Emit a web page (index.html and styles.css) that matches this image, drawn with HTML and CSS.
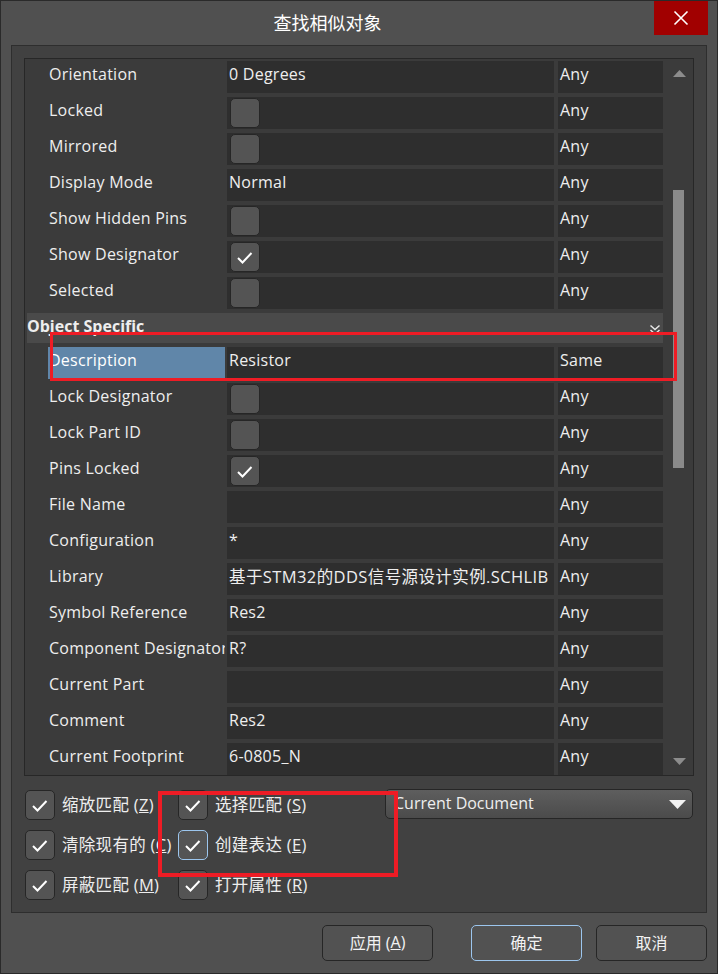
FILE: index.html
```html
<!DOCTYPE html>
<html>
<head>
<meta charset="utf-8">
<link rel="stylesheet" href="styles.css">
</head>
<body>
<div class="dialog">
  <div class="titlebar">
    <div class="title">查找相似对象</div>
    <div class="close"><svg width="16" height="16" viewBox="0 0 16 16"><path d="M1.5 1.5 L14.5 14.5 M14.5 1.5 L1.5 14.5" stroke="#fff" stroke-width="1.6" fill="none"/></svg></div>
  </div>
  <div class="panel">
    <div class="grid">
      <div class="rows">
        <div class="row"><div class="name">Orientation</div><div class="val">0 Degrees</div><div class="match">Any</div></div>
        <div class="row"><div class="name">Locked</div><div class="val"><span class="cb"></span></div><div class="match">Any</div></div>
        <div class="row"><div class="name">Mirrored</div><div class="val"><span class="cb"></span></div><div class="match">Any</div></div>
        <div class="row"><div class="name">Display Mode</div><div class="val">Normal</div><div class="match">Any</div></div>
        <div class="row"><div class="name">Show Hidden Pins</div><div class="val"><span class="cb"></span></div><div class="match">Any</div></div>
        <div class="row"><div class="name">Show Designator</div><div class="val"><span class="cb"><svg width="30" height="30" viewBox="0 0 30 30"><polyline points="8,16 12.5,20.5 21.5,11" stroke="#fff" stroke-width="2" fill="none"/></svg></span></div><div class="match">Any</div></div>
        <div class="row"><div class="name">Selected</div><div class="val"><span class="cb"></span></div><div class="match">Any</div></div>
        <div class="section"><span class="section-label">Object Specific</span><svg class="chev" width="12" height="12" viewBox="0 0 12 12"><polyline points="1.5,1.5 6,5.5 10.5,1.5" stroke="#e8e8e8" stroke-width="1.5" fill="none"/><polyline points="1.5,6 6,10 10.5,6" stroke="#e8e8e8" stroke-width="1.5" fill="none"/></svg></div>
        <div class="row"><div class="name sel">Description</div><div class="val">Resistor</div><div class="match">Same</div></div>
        <div class="row"><div class="name">Lock Designator</div><div class="val"><span class="cb"></span></div><div class="match">Any</div></div>
        <div class="row"><div class="name">Lock Part ID</div><div class="val"><span class="cb"></span></div><div class="match">Any</div></div>
        <div class="row"><div class="name">Pins Locked</div><div class="val"><span class="cb"><svg width="30" height="30" viewBox="0 0 30 30"><polyline points="8,16 12.5,20.5 21.5,11" stroke="#fff" stroke-width="2" fill="none"/></svg></span></div><div class="match">Any</div></div>
        <div class="row"><div class="name">File Name</div><div class="val"></div><div class="match">Any</div></div>
        <div class="row"><div class="name">Configuration</div><div class="val">*</div><div class="match">Any</div></div>
        <div class="row"><div class="name">Library</div><div class="val"><span class="lib">基于STM32的DDS信号源设计实例.SCHLIB</span></div><div class="match">Any</div></div>
        <div class="row"><div class="name">Symbol Reference</div><div class="val">Res2</div><div class="match">Any</div></div>
        <div class="row"><div class="name">Component Designator</div><div class="val">R?</div><div class="match">Any</div></div>
        <div class="row"><div class="name">Current Part</div><div class="val"></div><div class="match">Any</div></div>
        <div class="row"><div class="name">Comment</div><div class="val">Res2</div><div class="match">Any</div></div>
        <div class="row"><div class="name">Current Footprint</div><div class="val">6-0805_N</div><div class="match">Any</div></div>
      </div>
      <div class="scroll">
        <svg class="arrow-up" width="13" height="7" viewBox="0 0 13 7"><polygon points="0,7 6.5,0 13,7" fill="#8c8c8c"/></svg>
        <div class="thumb"></div>
        <svg class="arrow-down" width="13" height="7" viewBox="0 0 13 7"><polygon points="0,0 13,0 6.5,7" fill="#8c8c8c"/></svg>
      </div>
    </div>
    <div class="opts">
      <div class="col col1">
        <div class="opt"><span class="cb"><svg width="30" height="30" viewBox="0 0 30 30"><polyline points="8,16 12.5,20.5 21.5,11" stroke="#fff" stroke-width="2" fill="none"/></svg></span><span class="lbl">缩放匹配 (<u>Z</u>)</span></div>
        <div class="opt"><span class="cb"><svg width="30" height="30" viewBox="0 0 30 30"><polyline points="8,16 12.5,20.5 21.5,11" stroke="#fff" stroke-width="2" fill="none"/></svg></span><span class="lbl">清除现有的 (<u>C</u>)</span></div>
        <div class="opt"><span class="cb"><svg width="30" height="30" viewBox="0 0 30 30"><polyline points="8,16 12.5,20.5 21.5,11" stroke="#fff" stroke-width="2" fill="none"/></svg></span><span class="lbl">屏蔽匹配 (<u>M</u>)</span></div>
      </div>
      <div class="col col2">
        <div class="opt"><span class="cb"><svg width="30" height="30" viewBox="0 0 30 30"><polyline points="8,16 12.5,20.5 21.5,11" stroke="#fff" stroke-width="2" fill="none"/></svg></span><span class="lbl">选择匹配 (<u>S</u>)</span></div>
        <div class="opt"><span class="cb focus"><svg width="30" height="30" viewBox="0 0 30 30"><polyline points="8,16 12.5,20.5 21.5,11" stroke="#fff" stroke-width="2" fill="none"/></svg></span><span class="lbl">创建表达 (<u>E</u>)</span></div>
        <div class="opt"><span class="cb"><svg width="30" height="30" viewBox="0 0 30 30"><polyline points="8,16 12.5,20.5 21.5,11" stroke="#fff" stroke-width="2" fill="none"/></svg></span><span class="lbl">打开属性 (<u>R</u>)</span></div>
      </div>
      <div class="dropdown"><span>Current Document</span><svg width="17" height="9" viewBox="0 0 17 9"><polygon points="0,0 17,0 8.5,9" fill="#f2f2f2"/></svg></div>
    </div>
  </div>
  <div class="buttons">
    <div class="btn btn-apply">应用 (<u>A</u>)</div>
    <div class="btn btn-ok">确定</div>
    <div class="btn btn-cancel">取消</div>
  </div>
  <div class="mark mark1"></div>
  <div class="mark mark2"></div>
</div>
</body>
</html>
```

FILE: styles.css
```css
* { box-sizing: border-box; }
html, body { margin: 0; padding: 0; }
body {
  background: #2a2a2a;
  font-family: "Open Sans", "Noto Sans CJK SC", sans-serif;
  color: #eeeeee;
}
.dialog {
  position: relative;
  width: 718px;
  height: 974px;
  background: #505050;
  border: 1px solid #2a2a2a;
  display: flex;
  flex-direction: column;
}
.titlebar {
  height: 44px;
  display: flex;
  align-items: flex-start;
  flex-shrink: 0;
}
.title {
  flex: 1;
  height: 44px;
  line-height: 42px;
  text-align: center;
  font-size: 18px;
  font-family: "Noto Sans CJK SC", sans-serif;
  color: #ffffff;
}
.close {
  width: 54px;
  height: 34px;
  margin-right: 9px;
  background: #a10000;
  display: flex;
  align-items: center;
  justify-content: center;
}
.panel {
  margin: 0 10px;
  border: 1px solid #2e2e2e;
  background: #414141;
  padding: 12px;
  flex-shrink: 0;
}
.grid {
  height: 718px;
  border: 1px solid #272727;
  background: #3b3b3b;
  display: flex;
}
.rows {
  width: 638px;
  padding-top: 2px;
  display: flex;
  flex-direction: column;
  gap: 4px;
  overflow: hidden;
}
.row {
  height: 32px;
  display: flex;
  flex-shrink: 0;
  font-size: 16px;
  letter-spacing: 0.25px;
}
.name, .val, .match {
  display: flex;
  align-items: center;
  white-space: nowrap;
  overflow: hidden;
  padding-bottom: 6px;
}
.name {
  width: 177px;
  margin-left: 23px;
  padding-left: 1px;
}
.name.sel {
  background: #6086a9;
  color: #ffffff;
}
.val {
  width: 327px;
  margin-left: 2px;
  padding-left: 2px;
  background: #2e2e2e;
}
.lib {
  font-size: 16.5px;
  letter-spacing: 0.4px;
}
.match {
  width: 105px;
  margin-left: 4px;
  padding-left: 2px;
  background: #2e2e2e;
}
.val .cb {
  margin-left: 1px;
  margin-top: 6px;
}
.section {
  height: 30px;
  flex-shrink: 0;
  margin-left: 2px;
  background: #4a4a4a;
  font-weight: bold;
  font-size: 16px;
  display: flex;
  align-items: center;
  justify-content: space-between;
  padding-left: 0;
  padding-right: 2px;
  padding-bottom: 5px;
}
.chev { margin-top: 8px; }
.cb {
  width: 30px;
  height: 30px;
  flex-shrink: 0;
  border: 1px solid #262626;
  border-radius: 5px;
  background: #545454;
  display: block;
  position: relative;
}
.cb svg {
  position: absolute;
  left: -1px;
  top: -1px;
}
.cb.focus {
  border: 1.5px solid #9cc6ee;
}
.scroll {
  width: 30px;
  display: flex;
  flex-direction: column;
  align-items: flex-start;
  padding-left: 10px;
}
.arrow-up { margin-top: 11px; display: block; }
.thumb {
  width: 11px;
  height: 278px;
  margin-top: 113px;
  background: #8a8a8a;
}
.arrow-down { margin-top: auto; margin-bottom: 10px; display: block; }
.opts {
  display: flex;
  margin-top: 14px;
  padding-left: 1px;
}
.col {
  display: flex;
  flex-direction: column;
  gap: 10px;
}
.col1 { width: 153px; }
.col2 { width: 207px; }
.opt {
  display: flex;
  align-items: center;
  gap: 7px;
  height: 30px;
  font-size: 16.5px;
  white-space: nowrap;
}
.lbl { padding-bottom: 2px; letter-spacing: 0.3px; }
.dropdown {
  width: 308px;
  height: 30px;
  margin-top: -1px;
  border: 1px solid #262626;
  border-radius: 5px;
  background: linear-gradient(#5e5e5e, #4b4b4b);
  display: flex;
  align-items: center;
  justify-content: space-between;
  padding: 0 6px 3px 8px;
  font-size: 16px;
}
.dropdown svg { margin-top: 3px; }
.buttons {
  display: flex;
  justify-content: flex-end;
  margin-top: 12px;
  padding-right: 10px;
}
.btn {
  height: 36px;
  border: 1px solid #262626;
  border-radius: 5px;
  background: #525252;
  display: flex;
  align-items: center;
  justify-content: center;
  font-size: 16px;
  padding-bottom: 2px;
  color: #f2f2f2;
}
.btn-apply { width: 111px; }
.btn-ok { width: 111px; margin-left: 38px; border: 1.5px solid #9cc6ee; }
.btn-cancel { width: 111px; margin-left: 14px; }
.mark {
  position: absolute;
  border: 3px solid #ee1c25;
  pointer-events: none;
}
.mark1 { left: 49px; top: 331px; width: 627px; height: 49px; }
.mark2 { left: 157px; top: 790px; width: 240px; height: 86px; border-width: 4px; }
```
